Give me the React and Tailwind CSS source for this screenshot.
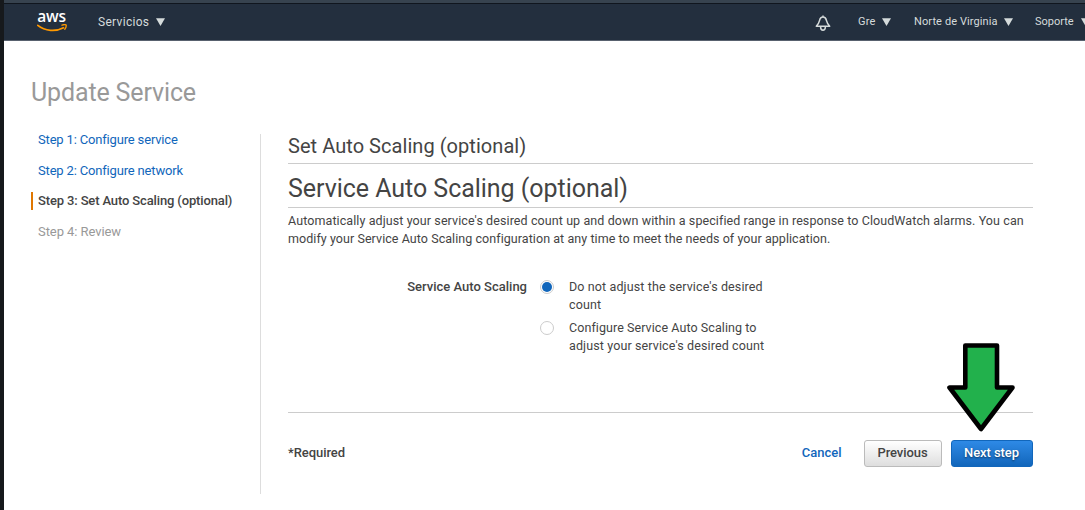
import React from "react";

function Caret({ className = "" }) {
  return (
    <svg className={`h-[8px] w-[9px] shrink-0 ${className}`} viewBox="0 0 9 8" fill="#d5dbdb">
      <path d="M0 0.3H9L4.5 8Z" />
    </svg>
  );
}

function AwsLogo() {
  return (
    <div className="flex h-[20px] w-[30px] shrink-0 flex-col items-center">
      <span className="h-[12px] pr-[1px] font-['Open_Sans',sans-serif] text-[15.5px] leading-[9px] font-semibold tracking-[-0.2px] text-white">aws</span>
      <svg className="h-[8px] w-[30px] shrink-0" viewBox="0 0 30 8" fill="none" stroke="#f90" strokeLinecap="round">
        <path d="M0.8 1.4C8 7.4 19 7.8 26.500 3.8" strokeWidth="1.7" />
        <path d="M25 1.2C26.5 0.5 28.4 0.5 29.2 1.1C29.4 2.5 28.9 4 27.8 5.2" strokeWidth="1.3" />
      </svg>
    </div>
  );
}

function Bell() {
  return (
    <svg className="h-[17px] w-[16px] shrink-0" viewBox="0 0 16 17" fill="none" stroke="#d5dbdb" strokeWidth="1.5">
      <path d="M8 0.4V2M1.300 11.200C3.300 9.200 4 7.800 4.500 5.600C5 3.300 6.400 2 8 2S11 3.300 11.500 5.600C12 7.800 12.700 9.200 14.700 11.200Z" strokeLinejoin="round" />
      <path d="M5.600 12C5.600 16.300 10.400 16.300 10.400 12" />
    </svg>
  );
}

function Header() {
  return (
    <header className="flex h-[37px] items-center overflow-hidden border-b border-[#58616e] bg-[#232f3e] pl-[33px] text-[#d5dbdb]">
      <AwsLogo />
      <span className="ml-[31px] w-[51px] shrink-0 text-[12px] leading-[16px] tracking-[0.3px] whitespace-nowrap">Servicios</span>
      <Caret className="ml-[7px]" />
      <div className="ml-[650px] flex shrink-0 items-center pt-[3px]"><Bell /></div>
      <span className="ml-[27px] w-[19px] shrink-0 text-[11px] tracking-[0.2px] whitespace-nowrap">Gre</span>
      <Caret className="ml-[5px]" />
      <span className="ml-[23px] w-[84px] shrink-0 text-[11px] tracking-[0.1px] whitespace-nowrap">Norte de Virginia</span>
      <Caret className="ml-[6px]" />
      <span className="ml-[22px] w-[39px] shrink-0 text-[11px] whitespace-nowrap">Soporte</span>
      <Caret className="ml-[7px]" />
    </header>
  );
}

function Steps() {
  return (
    <nav className="flex h-[360px] w-[230px] shrink-0 flex-col border-r border-[#ddd] text-[13px] leading-[18px] tracking-[-0.14px]">
      <a className="mt-[-3px] mb-[13px] pl-[7px] tracking-[-0.17px] text-[#1166bb]">Step 1: Configure service</a>
      <a className="mb-[12px] pl-[7px] tracking-[-0.17px] text-[#1166bb]">Step 2: Configure network</a>
      <span className="mb-[13px] border-l-2 border-[#e07700] pl-[5px] font-medium whitespace-nowrap text-[#444]">Step 3: Set Auto Scaling (optional)</span>
      <span className="pl-[7px] tracking-[-0.07px] text-[#999]">Step 4: Review</span>
    </nav>
  );
}

function Radio({ checked }) {
  return (
    <span className="flex size-[14px] shrink-0 items-center justify-center rounded-full border border-[#ccc] bg-white">
      {checked && <span className="size-[10px] rounded-full bg-[#1166bb]" />}
    </span>
  );
}

function Arrow() {
  return (
    <svg className="absolute top-[342px] left-[942px] h-[90px] w-[70px]" viewBox="0 0 70 90">
      <path d="M19.300 3.500H51V45.500H66.500L35 87L3.500 45.500H19.300Z" fill="#22b14c" stroke="#000" strokeWidth="4.600" strokeLinejoin="round" />
    </svg>
  );
}

export default function App() {
  return (
    <div className="relative h-[510px] w-[1085px] overflow-hidden border-l-4 border-[#16191c] bg-white font-['Roboto',sans-serif] text-[#444]">
      <div className="h-[4px] border-b border-[#10161e] bg-[#37434f]" />
      <Header />
      <h1 className="ml-[27px] pt-[37px] text-[25px] leading-[30px] tracking-[-0.14px] text-[#999]">Update Service</h1>
      <div className="ml-[27px] flex pt-[26px]">
        <Steps />
        <main className="ml-[27px] w-[745px]">
          <h2 className="flex h-[30px] items-center border-b border-[#ccc] pb-[6px] text-[20px] leading-[24px] tracking-[0.05px]">Set Auto Scaling (optional)</h2>
          <h2 className="flex h-[44px] items-center border-b border-[#ccc] pt-[7px] text-[25px] leading-[30px] tracking-[-0.04px]">Service Auto Scaling (optional)</h2>
          <p className="pt-[4px] text-[12.5px] leading-[18px]">
            <span className="block tracking-[0.092px] whitespace-nowrap">Automatically adjust your service's desired count up and down within a specified range in response to CloudWatch alarms. You can</span>
            <span className="block tracking-[0.06px] whitespace-nowrap">modify your Service Auto Scaling configuration at any time to meet the needs of your application.</span>
          </p>
          <div className="flex pt-[30px] text-[12.5px] leading-[18px] tracking-[0.12px]">
            <span className="w-[239px] text-right text-[13px] font-medium tracking-normal">Service Auto Scaling</span>
            <div className="ml-[13px] flex flex-col gap-[5px]">
              <label className="flex gap-[15px]"><span className="pt-[2px]"><Radio checked /></span><span>Do not adjust the service's desired<br />count</span></label>
              <label className="flex gap-[15px]"><span className="pt-[2px]"><Radio /></span><span><span className="tracking-[0.07px]">Configure Service Auto Scaling to</span><br />adjust your service's desired count</span></label>
            </div>
          </div>
          <div className="mt-[57px] flex items-center border-t border-[#ccc] pt-[27px] text-[13px] font-medium">
            <span className="pb-[2px] tracking-[-0.07px]">*Required</span>
            <a className="ml-auto pb-[2px] text-[#1166bb]">Cancel</a>
            <button className="ml-[22.5px] h-[27px] w-[78px] rounded-[3px] border border-[#bbb] bg-linear-to-b from-white to-[#dedede] pr-[1px] pb-[2px] pl-0 tracking-[-0.07px]">Previous</button>
            <button className="ml-[9px] h-[27px] w-[82px] rounded-[3px] border border-[#1166bb] bg-linear-to-b from-[#2e8ae6] to-[#1166bb] pr-[1px] pb-[2px] tracking-[-0.07px] text-white text-shadow-[0_1px_2px_#00000088]">Next step</button>
          </div>
        </main>
      </div>
      <Arrow />
    </div>
  );
}
